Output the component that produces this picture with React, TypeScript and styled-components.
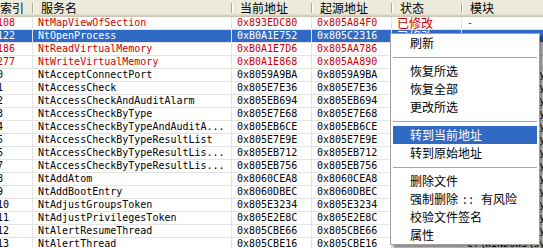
import React from "react";
import styled, { createGlobalStyle } from "styled-components";

const GlobalStyle = createGlobalStyle`
    html, body {
        margin: 0;
        padding: 0;
        background: #fff;
    }
    body {
        overflow: hidden;
    }
`;

const COLS = "41px 199px 80px 80px 70px 220px";
const GRID = "#e4e4e4";
const RED = "#cc0000";

const Page = styled.div`
    position: relative;
    width: 543px;
    height: 248px;
    overflow: hidden;
    background: #fff;
`;

const Table = styled.div`
    margin-left: -8px;
    width: 700px;
`;

const HeaderRow = styled.div`
    display: grid;
    grid-template-columns: ${COLS};
    height: 17px;
    background: #ebeadb;
    box-shadow: inset 0 -1px 0 #cbc7b8, inset 0 -2px 0 #d6d2c2, inset 0 -3px 0 #e2decd;
`;

const HeaderCell = styled.div`
    position: relative;
    padding-left: 8px;
    font-family: "Noto Sans CJK SC", "Noto Sans", sans-serif;
    font-size: 12px;
    line-height: 16px;
    color: #000;
    white-space: nowrap;
    &::after {
        content: "";
        position: absolute;
        right: 0;
        top: 3px;
        bottom: 4px;
        width: 1px;
        background: #aca899;
        box-shadow: 1px 0 0 #fff;
    }
`;

const Row = styled.div<{ $selected?: boolean }>`
    display: grid;
    grid-template-columns: ${COLS};
    height: 13px;
    box-sizing: border-box;
    border-bottom: 1px solid ${GRID};
    background: ${(p) => (p.$selected ? "#316ac5" : "transparent")};
`;

const Cell = styled.div<{ $color: string; $cjk?: boolean }>`
    box-sizing: border-box;
    border-right: 1px solid ${GRID};
    padding-left: 5px;
    overflow: hidden;
    white-space: nowrap;
    height: 12px;
    line-height: 12px;
    color: ${(p) => p.$color};
    font-family: ${(p) =>
        p.$cjk
            ? `"Noto Sans CJK SC", "Noto Sans", sans-serif`
            : `"DejaVu Sans Mono", "Liberation Mono", monospace`};
    font-size: ${(p) => (p.$cjk ? "12px" : "10px")};
`;

const Menu = styled.div`
    position: absolute;
    left: 390px;
    top: 33px;
    width: 150px;
    box-sizing: border-box;
    border: 1px solid #a0a0a0;
    background: #fff;
    padding: 0 2px;
    box-shadow: 3px 3px 2px rgba(0, 0, 0, 0.45);
`;

const MenuItem = styled.div<{ $active?: boolean }>`
    height: 18px;
    line-height: 18px;
    padding-left: 17px;
    font-family: "Noto Sans CJK SC", "Noto Sans", sans-serif;
    font-size: 12px;
    white-space: pre;
    color: ${(p) => (p.$active ? "#fff" : "#000")};
    background: ${(p) => (p.$active ? "#316ac5" : "transparent")};
`;

const Gap = styled.span`
    display: inline-block;
    width: 23px;
    text-align: center;
    letter-spacing: 3px;
`;

const Separator = styled.div`
    height: 1px;
    margin: 5px 0 4px;
    background: #aca899;
`;

type Entry = {
    idx: string;
    name: string;
    cur: string;
    orig: string;
    hooked?: boolean;
    selected?: boolean;
};

const MODULE = "C:\\WINDOWS\\system32\\ntkrnlpa.exe";

const rows: Entry[] = [
    { idx: "108", name: "NtMapViewOfSection", cur: "0x893EDC80", orig: "0x805A84F0", hooked: true },
    { idx: "122", name: "NtOpenProcess", cur: "0xB0A1E752", orig: "0x805C2316", hooked: true, selected: true },
    { idx: "186", name: "NtReadVirtualMemory", cur: "0xB0A1E7D6", orig: "0x805AA786", hooked: true },
    { idx: "277", name: "NtWriteVirtualMemory", cur: "0xB0A1E868", orig: "0x805AA890", hooked: true },
    { idx: "0", name: "NtAcceptConnectPort", cur: "0x8059A9BA", orig: "0x8059A9BA" },
    { idx: "1", name: "NtAccessCheck", cur: "0x805E7E36", orig: "0x805E7E36" },
    { idx: "2", name: "NtAccessCheckAndAuditAlarm", cur: "0x805EB694", orig: "0x805EB694" },
    { idx: "3", name: "NtAccessCheckByType", cur: "0x805E7E68", orig: "0x805E7E68" },
    { idx: "4", name: "NtAccessCheckByTypeAndAuditA...", cur: "0x805EB6CE", orig: "0x805EB6CE" },
    { idx: "5", name: "NtAccessCheckByTypeResultList", cur: "0x805E7E9E", orig: "0x805E7E9E" },
    { idx: "6", name: "NtAccessCheckByTypeResultLis...", cur: "0x805EB712", orig: "0x805EB712" },
    { idx: "7", name: "NtAccessCheckByTypeResultLis...", cur: "0x805EB756", orig: "0x805EB756" },
    { idx: "8", name: "NtAddAtom", cur: "0x8060CEA8", orig: "0x8060CEA8" },
    { idx: "9", name: "NtAddBootEntry", cur: "0x8060DBEC", orig: "0x8060DBEC" },
    { idx: "10", name: "NtAdjustGroupsToken", cur: "0x805E3234", orig: "0x805E3234" },
    { idx: "11", name: "NtAdjustPrivilegesToken", cur: "0x805E2E8C", orig: "0x805E2E8C" },
    { idx: "12", name: "NtAlertResumeThread", cur: "0x805CBE66", orig: "0x805CBE66" },
    { idx: "13", name: "NtAlertThread", cur: "0x805CBE16", orig: "0x805CBE16" },
];

const headers = ["索引", "服务名", "当前地址", "起源地址", "状态", "模块"];

const App = () => {
    return (
        <>
            <GlobalStyle />
            <Page>
                <Table>
                    <HeaderRow>
                        {headers.map((h) => (
                            <HeaderCell key={h}>{h}</HeaderCell>
                        ))}
                    </HeaderRow>
                    {rows.map((r) => {
                        const color = r.selected ? "#fff" : r.hooked ? RED : "#000";
                        return (
                            <Row key={r.idx} $selected={r.selected}>
                                <Cell $color={color}>{r.idx}</Cell>
                                <Cell $color={color}>{r.name}</Cell>
                                <Cell $color={color}>{r.cur}</Cell>
                                <Cell $color={color}>{r.orig}</Cell>
                                <Cell $color={color} $cjk={r.hooked}>
                                    {r.hooked ? "已修改" : "-"}
                                </Cell>
                                <Cell $color={color}>{r.hooked ? "-" : MODULE}</Cell>
                            </Row>
                        );
                    })}
                </Table>
                <Menu>
                    <MenuItem>刷新</MenuItem>
                    <Separator />
                    <MenuItem>恢复所选</MenuItem>
                    <MenuItem>恢复全部</MenuItem>
                    <MenuItem>更改所选</MenuItem>
                    <Separator />
                    <MenuItem $active>转到当前地址</MenuItem>
                    <MenuItem>转到原始地址</MenuItem>
                    <Separator />
                    <MenuItem>删除文件</MenuItem>
                    <MenuItem>
                        强制删除<Gap>::</Gap>有风险
                    </MenuItem>
                    <MenuItem>校验文件签名</MenuItem>
                    <MenuItem>属性</MenuItem>
                </Menu>
            </Page>
        </>
    );
};

export default App;
